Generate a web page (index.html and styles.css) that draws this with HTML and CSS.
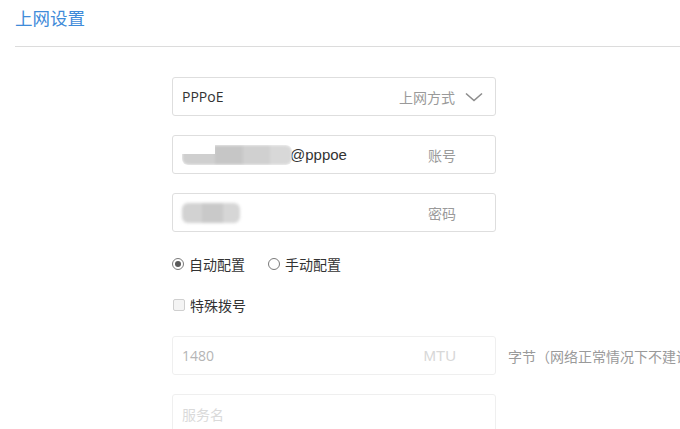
FILE: index.html
```html
<!DOCTYPE html>
<html lang="zh">
<head>
<meta charset="utf-8">
<title>上网设置</title>
<link rel="stylesheet" href="styles.css">
</head>
<body>
<div class="page">
  <div class="header"><h1 class="title">上网设置</h1></div>
  <div class="form">
    <div class="field">
      <span class="value">PPPoE</span>
      <span class="label">上网方式</span>
      <svg class="chev" width="18" height="10" viewBox="0 0 18 10"><polyline points="1,1.5 9,8.5 17,1.5" fill="none" stroke="#8c8c8c" stroke-width="1.6"/></svg>
    </div>
    <div class="field">
      <span class="blur blur-user"></span><span class="value plain">@pppoe</span>
      <span class="label pad">账号</span>
    </div>
    <div class="field">
      <span class="blur blur-pass"></span>
      <span class="label pad">密码</span>
    </div>
    <div class="radios">
      <label class="opt"><span class="radio on"></span>自动配置</label>
      <label class="opt"><span class="radio"></span>手动配置</label>
    </div>
    <div class="checks">
      <label class="opt"><span class="check"></span>特殊拨号</label>
    </div>
    <div class="row">
      <div class="field disabled">
        <span class="value dim">1480</span>
        <span class="label pad faint">MTU</span>
      </div>
      <span class="hint">字节（网络正常情况下不建议修改）</span>
    </div>
    <div class="field disabled">
      <span class="value faint">服务名</span>
    </div>
  </div>
</div>
</body>
</html>
```
FILE: styles.css
```css
html, body {
  margin: 0;
  padding: 0;
  overflow: hidden;
  background: #fff;
  font-family: "Noto Sans CJK SC", "Noto Sans", sans-serif;
  color: #333;
}
.page {
  width: 680px;
}
.header {
  margin-left: 15px;
  height: 46px;
  border-bottom: 1px solid #dcdcdc;
}
.title {
  margin: 0;
  padding-top: 5px;
  font-size: 17.5px;
  font-weight: normal;
  line-height: 26px;
  color: #3f8bd9;
}
.form {
  margin-left: 172px;
  padding-top: 30px;
  display: flex;
  flex-direction: column;
  gap: 19px;
}
.field {
  box-sizing: border-box;
  width: 324px;
  height: 39px;
  border: 1px solid #dedede;
  border-radius: 3px;
  display: flex;
  align-items: center;
  padding: 0 12px 0 9px;
  font-size: 14px;
  flex-shrink: 0;
}
.value {
  color: #333;
  font-family: "Open Sans", "Noto Sans CJK SC", sans-serif;
  font-size: 14px;
}
.value.plain {
  font-family: "Liberation Sans", sans-serif;
  font-size: 15px;
  margin-left: -2px;
}
.label {
  margin-left: auto;
  color: #9a9a9a;
  font-size: 14px;
}
.label.pad {
  margin-right: 27px;
}
.chev {
  margin-left: 10px;
  margin-right: 0;
}
.blur {
  display: inline-block;
  height: 20px;
  filter: blur(1.5px);
  border-radius: 6px;
}
.blur-user {
  width: 110px;
  background: linear-gradient(to right, #cfcfcf 0 30%, #c6c6c6 30% 55%, #d0d0d0 55% 80%, #d8d8d8 80% 100%);
  -webkit-mask: linear-gradient(to right, transparent 0 30%, #000 30%) top / 100% 50% no-repeat,
                linear-gradient(#000, #000) bottom / 100% 55% no-repeat;
}
.blur-pass {
  width: 58px;
  background: linear-gradient(to right, #d2d2d2 0 35%, #c9c9c9 35% 70%, #d6d6d6 70%);
}
.radios, .checks {
  display: flex;
  align-items: center;
  height: 20px;
  font-size: 14px;
  color: #333;
}
.radios {
  margin-top: 3px;
  gap: 23px;
}
.checks {
  margin-top: 2px;
}
.opt {
  display: flex;
  align-items: center;
  gap: 5px;
}
.radio {
  box-sizing: border-box;
  width: 12px;
  height: 12px;
  border: 1px solid #7a7a7a;
  border-radius: 50%;
  display: flex;
  align-items: center;
  justify-content: center;
}
.radio.on::after {
  content: "";
  width: 6px;
  height: 6px;
  border-radius: 50%;
  background: #5a5a5a;
}
.check {
  box-sizing: border-box;
  width: 12px;
  height: 12px;
  margin-left: 1px;
  border: 1px solid #cfcfcf;
  border-radius: 2px;
  background: #f4f4f4;
}
.row {
  display: flex;
  align-items: center;
  gap: 12px;
  margin-top: 2px;
  overflow: hidden;
}
.field.disabled {
  border-color: #efefef;
}
.value.dim {
  color: #b5b5b5;
}
.faint {
  color: #d6d6d6;
}
.label.faint {
  color: #d8d8d8;
  font-family: "Liberation Sans", sans-serif;
  font-size: 15px;
}
.value.faint {
  color: #dadada;
  font-family: "Noto Sans CJK SC", sans-serif;
}
.hint {
  white-space: nowrap;
  color: #9a9a9a;
  font-size: 14px;
}
```
